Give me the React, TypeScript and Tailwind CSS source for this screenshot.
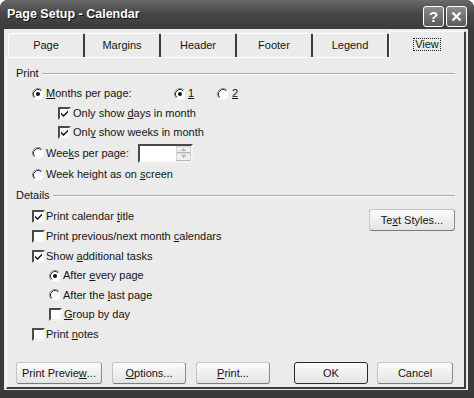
import React from "react";

function Radio({ checked }: { checked?: boolean }) {
  return (
    <svg width="12" height="12" viewBox="0 0 12 12" className="shrink-0">
      <circle cx="6" cy="6" r="5.5" fill="#ffffff" />
      <path d="M2.11 9.89A5.5 5.5 0 0 1 9.89 2.11" fill="none" stroke="#8a8a8a" />
      <path d="M2.82 9.18A4.5 4.5 0 0 1 9.18 2.82" fill="none" stroke="#333333" />
      {checked && <circle cx="6" cy="6" r="2" fill="#111111" />}
    </svg>
  );
}

function Check({ checked }: { checked?: boolean }) {
  return (
    <span className="flex h-[13px] w-[13px] shrink-0 items-center justify-center border-2 border-t-[#4a4a4a] border-l-[#4a4a4a] border-r-[#f2f2f2] border-b-[#f2f2f2] bg-white">
      {checked && (
        <svg width="7" height="7" viewBox="0 0 7 7">
          <path d="M0 2.5L2.5 5L7 0.5V2.5L2.5 7L0 4.5Z" fill="#111111" />
        </svg>
      )}
    </span>
  );
}

function GroupLabel({ label }: { label: string }) {
  return (
    <div className="flex h-[21px] items-center gap-[3px]">
      <span>{label}</span>
      <div className="flex flex-1 flex-col">
        <div className="h-px bg-[#a8a8a8]" />
        <div className="h-px bg-white" />
      </div>
    </div>
  );
}

function Btn({ className, children, def }: { className: string; children: React.ReactNode; def?: boolean }) {
  return (
    <div
      className={`${className} flex h-[22px] items-center justify-center rounded-[3px] border bg-gradient-to-b from-[#fbfbfb] to-[#e4e4e4] ${
        def ? "border-[#2a2a2a]" : "border-[#c4c4c4] border-b-[#7a7a7a] border-r-[#8a8a8a]"
      }`}
    >
      {children}
    </div>
  );
}

const tabs = ["Page", "Margins", "Header", "Footer", "Legend"];

export default function App() {
  return (
    <div className="h-[398px] w-[474px] overflow-hidden bg-white font-['Liberation_Sans',Arial,sans-serif] text-[11px] text-[#141414]">
      <div className="flex h-full flex-col rounded-t-[8px] bg-[#3a3a3a]">
        {/* Title bar */}
        <div className="flex h-[29px] shrink-0 items-center rounded-t-[8px] bg-gradient-to-b from-[#6a6a6a] via-[#454545] to-[#3c3c3c] pl-[7px] pr-[7px]">
          <span className="text-[12.5px] font-bold text-white [text-shadow:1px_1px_0_#111]">Page Setup - Calendar</span>
          <div className="ml-auto flex gap-[2px] pt-[3px]">
            <div className="flex h-[21px] w-[21px] items-center justify-center rounded-[3px] border border-white bg-gradient-to-b from-[#8c8c8c] to-[#5a5a5a] text-[15px] font-bold leading-none text-white">
              ?
            </div>
            <div className="flex h-[21px] w-[21px] items-center justify-center rounded-[3px] border border-white bg-gradient-to-b from-[#8c8c8c] to-[#5a5a5a]">
              <svg width="11" height="11" viewBox="0 0 11 11">
                <path d="M1.5 1.5L9.5 9.5M9.5 1.5L1.5 9.5" stroke="#ffffff" strokeWidth="2.2" />
              </svg>
            </div>
          </div>
        </div>

        {/* Body */}
        <div className="mb-[8px] ml-[4px] mr-[6px] flex flex-1 flex-col bg-[#ebebeb] px-[2px] pb-[1px]">
          {/* Tabs */}
          <div className="ml-[2px] flex h-[28px] shrink-0 items-end">
            {tabs.map((t, i) => (
              <div
                key={t}
                className={`flex h-[24px] flex-1 items-center justify-center rounded-t-[2px] border-t border-t-white border-r-2 border-r-[#3c3c3c] ${
                  i === 0 ? "border-l border-l-white" : ""
                }`}
              >
                {t}
              </div>
            ))}
            <div className="relative z-10 -mb-px flex h-[27px] flex-1 items-center justify-center rounded-t-[2px] border-l border-t border-l-white border-t-white border-r-2 border-r-[#3c3c3c] bg-[#ebebeb] pb-[2px]">
              <span className="border border-dotted border-[#222] px-px leading-[11px]">View</span>
            </div>
          </div>

          {/* Panel */}
          <div className="flex flex-1 flex-col border-l border-t border-l-white border-t-white border-r-2 border-b-2 border-r-[#3c3c3c] border-b-[#3c3c3c] pl-[9px] pr-[9px] pt-[5px]">
            <GroupLabel label="Print" />
            <div className="flex h-[19px] items-center pl-[16px]">
              <Radio checked />
              <span className="ml-[2px] w-[128px]">
                <u>M</u>onths per page:
              </span>
              <Radio checked />
              <span className="ml-[2px] w-[29px]">
                <u>1</u>
              </span>
              <Radio />
              <span className="ml-[3px]">
                <u>2</u>
              </span>
            </div>
            <div className="flex h-5 items-center pl-[42px]">
              <Check checked />
              <span className="ml-[2px]">
                Only show <u>d</u>ays in month
              </span>
            </div>
            <div className="flex h-[19px] items-center pl-[42px]">
              <Check checked />
              <span className="ml-[2px]">
                Onl<u>y</u> show weeks in month
              </span>
            </div>
            <div className="flex h-[22px] items-center pl-[16px]">
              <Radio />
              <span className="ml-[2px] w-[92px]">
                Wee<u>k</u>s per page:
              </span>
              <div className="flex h-[19px] w-[55px] border-2 border-t-[#4a4a4a] border-l-[#4a4a4a] border-r-[#f2f2f2] border-b-[#f2f2f2] bg-white">
                <div className="flex-1" />
                <div className="flex w-[15px] flex-col">
                  <div className="flex flex-1 items-center justify-center border border-[#d6d6d6] border-b-[#b8b8b8] bg-[#efefef]">
                    <svg width="5" height="3" viewBox="0 0 5 3">
                      <path d="M0 3L2.5 0L5 3Z" fill="#b0b0b0" />
                    </svg>
                  </div>
                  <div className="flex flex-1 items-center justify-center border border-[#d6d6d6] border-b-[#b8b8b8] bg-[#efefef]">
                    <svg width="5" height="3" viewBox="0 0 5 3">
                      <path d="M0 0L2.5 3L5 0Z" fill="#b0b0b0" />
                    </svg>
                  </div>
                </div>
              </div>
            </div>
            <div className="flex h-[21px] items-center pl-[16px]">
              <Radio />
              <span className="ml-[2px]">
                Week height as on <u>s</u>creen
              </span>
            </div>

            <GroupLabel label="Details" />
            <div className="flex">
              <div className="flex flex-1 flex-col">
                <div className="flex h-[21px] items-center pl-[16px]">
                  <Check checked />
                  <span className="ml-px">
                    Print calendar <u>t</u>itle
                  </span>
                </div>
                <div className="flex h-[19px] items-center pl-[16px]">
                  <Check />
                  <span className="ml-px">
                    Print previous/next month <u>c</u>alendars
                  </span>
                </div>
                <div className="flex h-5 items-center pl-[16px]">
                  <Check checked />
                  <span className="ml-px">
                    Show <u>a</u>dditional tasks
                  </span>
                </div>
                <div className="flex h-[19px] items-center pl-[33px]">
                  <Radio checked />
                  <span className="ml-[2px]">
                    After <u>e</u>very page
                  </span>
                </div>
                <div className="flex h-5 items-center pl-[33px]">
                  <Radio />
                  <span className="ml-[2px]">
                    After the <u>l</u>ast page
                  </span>
                </div>
                <div className="flex h-[19px] items-center pl-[33px]">
                  <Check />
                  <span className="ml-[2px]">
                    <u>G</u>roup by day
                  </span>
                </div>
                <div className="flex h-5 items-center pl-[16px]">
                  <Check />
                  <span className="ml-px">
                    Print <u>n</u>otes
                  </span>
                </div>
              </div>
              <div className="pt-[3px]">
                <Btn className="w-[86px]">
                  Te<u>x</u>t Styles...
                </Btn>
              </div>
            </div>

            {/* Bottom buttons */}
            <div className="mt-[18px] flex">
              <Btn className="w-[86px]">
                Print Previe<u>w</u>...
              </Btn>
              <Btn className="ml-[10px] w-[74px]">
                <u>O</u>ptions...
              </Btn>
              <Btn className="ml-[10px] w-[74px]">
                <u>P</u>rint...
              </Btn>
              <Btn className="ml-[24px] w-[74px]" def>
                OK
              </Btn>
              <Btn className="ml-[9px] w-[76px]">Cancel</Btn>
            </div>
          </div>
        </div>
      </div>
    </div>
  );
}
